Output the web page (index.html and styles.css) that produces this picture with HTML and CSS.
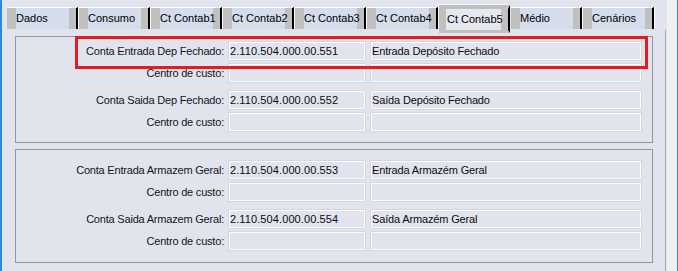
FILE: index.html
```html
<!DOCTYPE html>
<html lang="pt">
<head>
<meta charset="utf-8">
<title>Ct Contab5</title>
<link rel="stylesheet" href="styles.css">
</head>
<body>
<div class="window">
  <div class="edge-left"></div>
  <div class="main">
    <div class="tabs">
      <div class="tab">Dados</div>
      <div class="tab">Consumo</div>
      <div class="tab">Ct Contab1</div>
      <div class="tab">Ct Contab2</div>
      <div class="tab">Ct Contab3</div>
      <div class="tab">Ct Contab4</div>
      <div class="tab active">Ct Contab5</div>
      <div class="tab">Médio</div>
      <div class="tab">Cenários</div>
    </div>
    <div class="panel">
      <div class="group group-first">
        <div class="pair">
          <div class="row"><span class="label">Conta Entrada Dep Fechado:</span><span class="field code">2.110.504.000.00.551</span><span class="field desc">Entrada Depósito Fechado</span></div>
          <div class="row"><span class="label">Centro de custo:</span><span class="field code"></span><span class="field desc"></span></div>
        </div>
        <div class="pair">
          <div class="row"><span class="label">Conta Saida Dep Fechado:</span><span class="field code">2.110.504.000.00.552</span><span class="field desc">Saída Depósito Fechado</span></div>
          <div class="row"><span class="label">Centro de custo:</span><span class="field code"></span><span class="field desc"></span></div>
        </div>
      </div>
      <div class="group group-second">
        <div class="pair">
          <div class="row"><span class="label">Conta Entrada Armazem Geral:</span><span class="field code">2.110.504.000.00.553</span><span class="field desc">Entrada Armazém Geral</span></div>
          <div class="row"><span class="label">Centro de custo:</span><span class="field code"></span><span class="field desc"></span></div>
        </div>
        <div class="pair">
          <div class="row"><span class="label">Conta Saida Armazem Geral:</span><span class="field code">2.110.504.000.00.554</span><span class="field desc">Saída Armazém Geral</span></div>
          <div class="row"><span class="label">Centro de custo:</span><span class="field code"></span><span class="field desc"></span></div>
        </div>
      </div>
    </div>
  </div>
  <div class="gutter"></div>
</div>
<div class="highlight"></div>
</body>
</html>
```
FILE: styles.css
```css
html, body {
  margin: 0;
  padding: 0;
}
body {
  width: 678px;
  height: 271px;
  overflow: hidden;
  position: relative;
  background: #e1e4ec;
  font-family: "Liberation Sans", Arial, sans-serif;
  font-size: 11px;
  color: #000000;
}
.window {
  display: flex;
  height: 271px;
}
.edge-left {
  flex: none;
  width: 2px;
  background: #2a8ae0;
}
.main {
  flex: none;
  width: 665px;
  background: #e1e4ec;
  display: flex;
  flex-direction: column;
}
.gutter {
  flex: 1;
  background: #f0f0f0;
  border-right: 1px solid #2a8ae0;
}
.tabs {
  display: flex;
  align-items: flex-start;
  height: 25px;
  padding-top: 5px;
  margin-left: 5px;
  position: relative;
  z-index: 1;
  box-sizing: content-box;
}
.tab {
  flex: none;
  box-sizing: border-box;
  width: 71px;
  height: 22px;
  margin-top: 2px;
  margin-right: 1px;
  border-top: 1px solid #ffffff;
  border-right: 2px solid #000000;
  background: #d5dcec;
  box-shadow: inset 9px 0 0 #c0c0c0, inset -7px 0 0 #c0c0c0, 1px 0 0 #ffffff;
  padding-left: 9px;
  line-height: 21px;
  white-space: nowrap;
  overflow: hidden;
}
.tab.active {
  height: 28px;
  margin-top: 0;
  border-top: 4px solid #c0c0c0;
  border-left: 7px solid #c0c0c0;
  border-bottom: 3px solid #c0c0c0;
  background: #e6e8ef;
  box-shadow: inset -7px 0 0 #c0c0c0, -1px -1px 0 #f4f4f6;
  padding-left: 1px;
  line-height: 20px;
}
.panel {
  flex: 1;
  margin-left: 3px;
  padding-left: 1px;
  box-sizing: border-box;
  width: 661px;
  border-right: 1px solid #a3a8b3;
}
.group {
  box-sizing: border-box;
  width: 638px;
  margin-left: 9px;
  margin-top: 6px;
  border: 1px solid #9197a3;
  display: flex;
  flex-direction: column;
  gap: 7px;
}
.group-first {
  padding: 4px 0 10px;
}
.group-second {
  padding: 10px 0 11px;
}
.pair {
  display: flex;
  flex-direction: column;
  gap: 2px;
}
.row {
  display: flex;
  align-items: center;
  height: 20px;
}
.label {
  flex: none;
  width: 208px;
  margin-right: 4px;
  text-align: right;
  letter-spacing: -0.2px;
  white-space: nowrap;
  color: #14141c;
}
.field {
  flex: none;
  box-sizing: border-box;
  height: 20px;
  line-height: 18px;
  border: 1px solid #d4d7de;
  box-shadow: inset 0 0 0 1px #fafbfc;
  padding-left: 1px;
  white-space: nowrap;
  color: #0b0b12;
}
.field.code {
  width: 138px;
  margin-right: 4px;
  letter-spacing: 0.1px;
}
.field.desc {
  width: 272px;
  letter-spacing: -0.15px;
}
.highlight {
  position: absolute;
  left: 75px;
  top: 36px;
  width: 573px;
  height: 33px;
  box-sizing: border-box;
  border: 3px solid #e31b23;
}
```
